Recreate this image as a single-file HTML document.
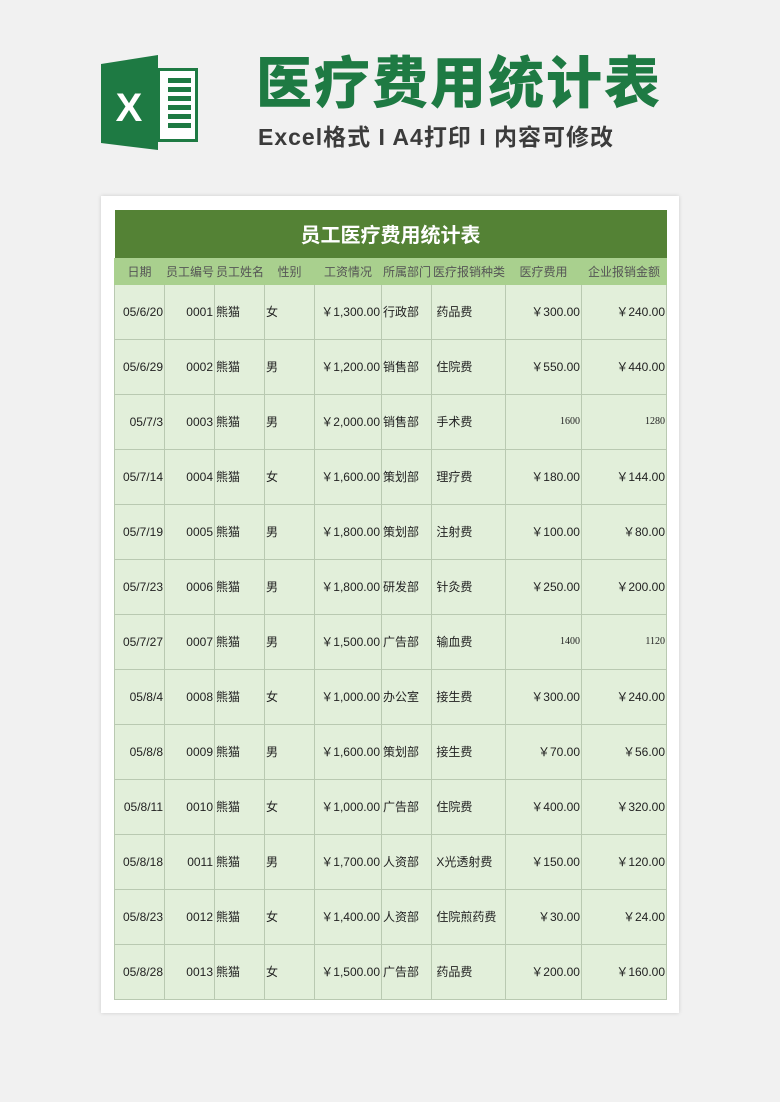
<!DOCTYPE html>
<html><head><meta charset="utf-8"><style>
*{margin:0;padding:0;box-sizing:border-box}
body{width:780px;height:1102px;background:#f1f1f1;position:relative;overflow:hidden;font-family:"Liberation Sans","Noto Sans CJK SC",sans-serif}
.t1{position:absolute;left:256px;top:52px;font-size:56px;font-weight:900;color:#1e7a43;letter-spacing:2px;white-space:nowrap;line-height:64px}
.t2{position:absolute;left:258px;top:122px;font-size:23px;font-weight:bold;color:#3b3b3b;white-space:nowrap;line-height:30px;letter-spacing:1px}
.card{position:absolute;left:101px;top:196px;width:578px;height:817px;background:#fff;box-shadow:0 0 4px rgba(0,0,0,.15)}
table{position:absolute;left:114px;top:210px;border-collapse:collapse;table-layout:fixed;width:552px}
td{border:1px solid #b9c9b1;font-size:12px;color:#222;height:55px;background:#e2efda;white-space:nowrap;overflow:hidden;padding:0 1px}
.title td{background:#548235;color:#fff;font-size:20px;font-weight:bold;text-align:center;height:48px;border:none}
.hd td{background:#a9d08e;color:#555;text-align:center;height:26px;font-size:12px;border-color:#a9d08e}
.r{text-align:right}.s{font-size:10px;font-family:"Liberation Serif",serif}
</style></head><body>
<svg style="position:absolute;left:100px;top:54px" width="100" height="98" viewBox="0 0 100 98">
<rect x="56" y="14" width="42" height="74" fill="#1e7a43"/>
<rect x="60" y="17" width="35" height="68" fill="#fff"/>
<g fill="#1e7a43"><rect x="68" y="24" width="23" height="5"/><rect x="68" y="33" width="23" height="5"/><rect x="68" y="42" width="23" height="5"/><rect x="68" y="51" width="23" height="5"/><rect x="68" y="60" width="23" height="5"/><rect x="68" y="69" width="23" height="5"/></g>
<polygon points="1,10 58,1 58,96 1,89" fill="#1e7a43"/>
<text x="29" y="67" font-family="Liberation Sans" font-weight="bold" font-size="40" fill="#fff" text-anchor="middle">X</text>
</svg>
<div class="t1">医疗费用统计表</div>
<div class="t2">Excel格式 <b>I</b> A4打印 <b>I</b> 内容可修改</div>
<div class="card"></div>
<table>
<colgroup><col style="width:50px"><col style="width:50px"><col style="width:50px"><col style="width:50px"><col style="width:67px"><col style="width:50px"><col style="width:74px"><col style="width:76px"><col style="width:85px"></colgroup>
<tr class="title"><td colspan="9">员工医疗费用统计表</td></tr>
<tr class="hd"><td>日期</td><td>员工编号</td><td>员工姓名</td><td>性别</td><td>工资情况</td><td>所属部门</td><td>医疗报销种类</td><td>医疗费用</td><td>企业报销金额</td></tr>
<tr><td class="r">05/6/20</td><td class="r">0001</td><td>熊猫</td><td>女</td><td class="r">￥1,300.00</td><td>行政部</td><td>&nbsp;药品费</td><td class="r">￥300.00</td><td class="r">￥240.00</td></tr>
<tr><td class="r">05/6/29</td><td class="r">0002</td><td>熊猫</td><td>男</td><td class="r">￥1,200.00</td><td>销售部</td><td>&nbsp;住院费</td><td class="r">￥550.00</td><td class="r">￥440.00</td></tr>
<tr><td class="r">05/7/3</td><td class="r">0003</td><td>熊猫</td><td>男</td><td class="r">￥2,000.00</td><td>销售部</td><td>&nbsp;手术费</td><td class="r s">1600</td><td class="r s">1280</td></tr>
<tr><td class="r">05/7/14</td><td class="r">0004</td><td>熊猫</td><td>女</td><td class="r">￥1,600.00</td><td>策划部</td><td>&nbsp;理疗费</td><td class="r">￥180.00</td><td class="r">￥144.00</td></tr>
<tr><td class="r">05/7/19</td><td class="r">0005</td><td>熊猫</td><td>男</td><td class="r">￥1,800.00</td><td>策划部</td><td>&nbsp;注射费</td><td class="r">￥100.00</td><td class="r">￥80.00</td></tr>
<tr><td class="r">05/7/23</td><td class="r">0006</td><td>熊猫</td><td>男</td><td class="r">￥1,800.00</td><td>研发部</td><td>&nbsp;针灸费</td><td class="r">￥250.00</td><td class="r">￥200.00</td></tr>
<tr><td class="r">05/7/27</td><td class="r">0007</td><td>熊猫</td><td>男</td><td class="r">￥1,500.00</td><td>广告部</td><td>&nbsp;输血费</td><td class="r s">1400</td><td class="r s">1120</td></tr>
<tr><td class="r">05/8/4</td><td class="r">0008</td><td>熊猫</td><td>女</td><td class="r">￥1,000.00</td><td>办公室</td><td>&nbsp;接生费</td><td class="r">￥300.00</td><td class="r">￥240.00</td></tr>
<tr><td class="r">05/8/8</td><td class="r">0009</td><td>熊猫</td><td>男</td><td class="r">￥1,600.00</td><td>策划部</td><td>&nbsp;接生费</td><td class="r">￥70.00</td><td class="r">￥56.00</td></tr>
<tr><td class="r">05/8/11</td><td class="r">0010</td><td>熊猫</td><td>女</td><td class="r">￥1,000.00</td><td>广告部</td><td>&nbsp;住院费</td><td class="r">￥400.00</td><td class="r">￥320.00</td></tr>
<tr><td class="r">05/8/18</td><td class="r">0011</td><td>熊猫</td><td>男</td><td class="r">￥1,700.00</td><td>人资部</td><td>&nbsp;X光透射费</td><td class="r">￥150.00</td><td class="r">￥120.00</td></tr>
<tr><td class="r">05/8/23</td><td class="r">0012</td><td>熊猫</td><td>女</td><td class="r">￥1,400.00</td><td>人资部</td><td>&nbsp;住院煎药费</td><td class="r">￥30.00</td><td class="r">￥24.00</td></tr>
<tr><td class="r">05/8/28</td><td class="r">0013</td><td>熊猫</td><td>女</td><td class="r">￥1,500.00</td><td>广告部</td><td>&nbsp;药品费</td><td class="r">￥200.00</td><td class="r">￥160.00</td></tr>
</table>
</body></html>
